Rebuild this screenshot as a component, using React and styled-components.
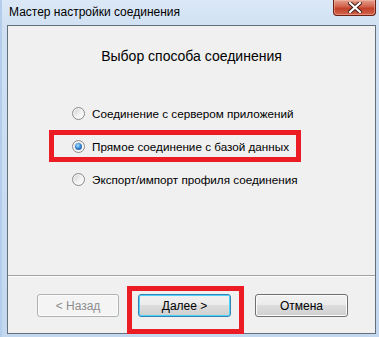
import styled, { createGlobalStyle } from "styled-components";

const Global = createGlobalStyle`
    html, body {
        margin: 0;
        padding: 0;
        background: #cfe0f3;
    }
    body {
        font-family: "Liberation Sans", Arial, sans-serif;
        font-size: 12px;
        color: #000;
    }
`

const Window = styled.div`
    width: 379px;
    height: 337px;
    display: flex;
    flex-direction: column;
    box-sizing: border-box;
    background: linear-gradient(180deg, #dbe8f6 0px, #cfe0f3 30px, #c3d8ef 100%);
    border-left: 2px solid #b3cdea;
    overflow: hidden;
`

const TitleBar = styled.div`
    height: 25px;
    flex: none;
    display: flex;
    align-items: flex-start;
    padding-left: 7px;
`

const Title = styled.span`
    font-size: 12px;
    line-height: 24px;
    color: #000;
`

const CloseButton = styled.div`
    margin-left: auto;
    margin-right: 3px;
    width: 43px;
    height: 16px;
    box-sizing: border-box;
    border: 1px solid #6b2116;
    border-top: none;
    border-radius: 0 0 4px 4px;
    background: linear-gradient(180deg, #e3a08f 0%, #d2604a 45%, #c1402a 55%, #d0654c 100%);
    box-shadow: inset 0 0 0 1px rgba(255, 200, 180, 0.45);
    display: flex;
    align-items: center;
    justify-content: center;
`

const Client = styled.div`
    flex: 1;
    margin: 0 3px 3px 5px;
    border: 1px solid #646f7c;
    background: #f0f0f0;
    display: flex;
    flex-direction: column;
`

const Body = styled.div`
    flex: 1;
    display: flex;
    flex-direction: column;
`

const Heading = styled.h2`
    margin: 20px 0 0;
    font-size: 14px;
    font-weight: normal;
    line-height: 20px;
    text-align: center;
`

const Options = styled.div`
    margin: 31px 0 0 41px;
    display: flex;
    flex-direction: column;
    align-items: flex-start;
    gap: 1px;
`

const OptionRow = styled.label`
    display: flex;
    align-items: center;
    height: 22px;
    padding: 0 7px 0 18px;
    border: 5px solid ${p => (p.$marked ? "#ec1c24" : "transparent")};
    gap: 7px;
    font-size: 11.7px;
`

const Radio = styled.span`
    position: relative;
    width: 13px;
    height: 13px;
    box-sizing: border-box;
    border-radius: 50%;
    border: 1px solid #8a8a8a;
    background: linear-gradient(135deg, #cfcfcf 0%, #f4f4f4 60%, #ffffff 100%);
    box-shadow: inset 0 0 0 1px #f8f8f8;

    &::after {
        content: "";
        display: ${p => (p.$checked ? "block" : "none")};
        position: absolute;
        left: 2px;
        top: 2px;
        width: 7px;
        height: 7px;
        border-radius: 50%;
        background: radial-gradient(circle at 40% 35%, #a8e2ff 0%, #3b8ad6 45%, #0f3d78 100%);
    }
`

const Separator = styled.div`
    height: 1px;
    background: #a0a0a0;
    border-bottom: 1px solid #ffffff;
`

const ButtonRow = styled.div`
    height: 56px;
    box-sizing: border-box;
    flex: none;
    display: flex;
    align-items: flex-start;
    padding: 9px 0 0 29px;
`

const Button = styled.button`
    width: ${p => p.$w}px;
    height: 23px;
    box-sizing: border-box;
    padding: 0;
    font-family: "Liberation Sans", Arial, sans-serif;
    font-size: 12px;
    color: ${p => (p.disabled ? "#8d8d8d" : "#000")};
    border-radius: 3px;
    border: 1px solid ${p => (p.disabled ? "#adb2b5" : p.$default ? "#3c7fb1" : "#707070")};
    background: ${p => p.disabled
        ? "#f4f4f4"
        : "linear-gradient(180deg, #f2f2f2 0%, #ebebeb 49%, #dddddd 50%, #cfcfcf 100%)"};
    box-shadow: ${p => (p.$default ? "inset 0 0 0 1px #48d4fd" : "inset 0 0 0 1px #fcfcfc")};
    margin-top: ${p => (p.$inBox ? 0 : 8)}px;
    margin-left: ${p => p.$ml || 0}px;
`

const Marker = styled.div`
    margin-left: 8px;
    border: 5px solid #ec1c24;
    padding: 3px 8px 12px 6px;
    position: relative;
`

function CloseGlyph() {
    return (
        <svg width="14" height="11" viewBox="0 0 14 11">
            <path d="M2 1 L12 10 M12 1 L2 10" stroke="#3a1a14" strokeWidth="4" strokeLinecap="square" />
            <path d="M2 1 L12 10 M12 1 L2 10" stroke="#ffffff" strokeWidth="2.2" strokeLinecap="square" />
        </svg>
    )
}

const options = [
    {label: "Соединение с сервером приложений"},
    {label: "Прямое соединение с базой данных", checked: true},
    {label: "Экспорт/импорт профиля соединения"},
]

export default function App() {
    return (
        <>
            <Global/>
            <Window>
                <TitleBar>
                    <Title>Мастер настройки соединения</Title>
                    <CloseButton><CloseGlyph/></CloseButton>
                </TitleBar>
                <Client>
                    <Body>
                        <Heading>Выбор способа соединения</Heading>
                        <Options>
                            {options.map(o => (
                                <OptionRow key={o.label} $marked={o.checked}>
                                    <Radio $checked={o.checked}/>
                                    {o.label}
                                </OptionRow>
                            ))}
                        </Options>
                    </Body>
                    <Separator/>
                    <ButtonRow>
                        <Button disabled $w={82}>&lt; Назад</Button>
                        <Marker>
                            <Button $w={93} $default $inBox>Далее &gt;</Button>
                        </Marker>
                        <Button $w={93} $ml={11}>Отмена</Button>
                    </ButtonRow>
                </Client>
            </Window>
        </>
    )
}
